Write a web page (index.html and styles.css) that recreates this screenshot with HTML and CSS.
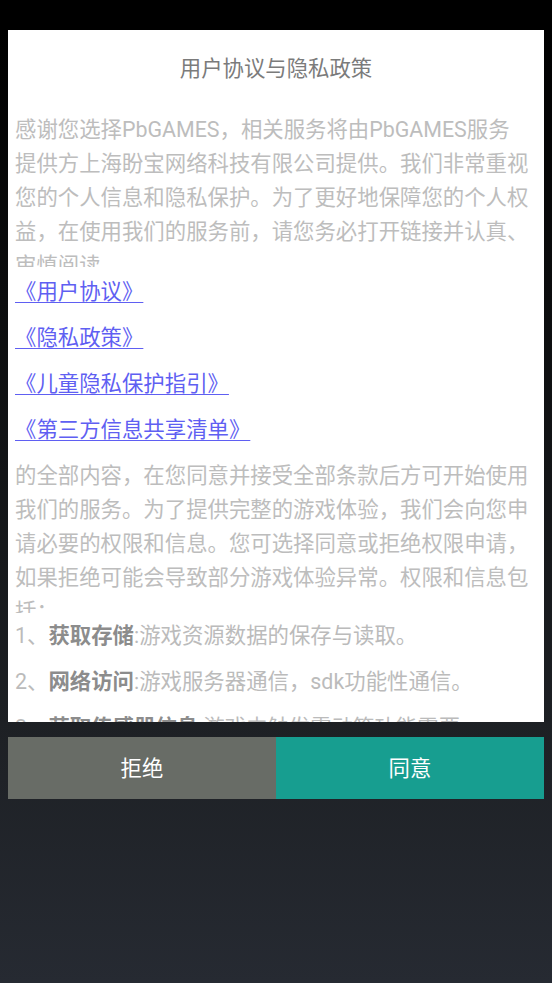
FILE: index.html
```html
<!DOCTYPE html>
<html lang="zh-CN">
<head>
<meta charset="utf-8">
<title>用户协议与隐私政策</title>
<link rel="stylesheet" href="styles.css">
</head>
<body>
<div class="screen">
  <div class="dialog">
    <div class="title">用户协议与隐私政策</div>
    <div class="scroll first">感谢您选择PbGAMES，相关服务将由PbGAMES服务<br>提供方上海盼宝网络科技有限公司提供。我们非常重视您的个人信息和隐私保护。为了更好地保障您的个人权益，在使用我们的服务前，请您务必打开链接并认真、审慎阅读</div>
    <div class="links">
      <div class="link-row"><a class="link" href="#">《用户协议》</a></div>
      <div class="link-row"><a class="link" href="#">《隐私政策》</a></div>
      <div class="link-row"><a class="link" href="#">《儿童隐私保护指引》</a></div>
      <div class="link-row"><a class="link" href="#">《第三方信息共享清单》</a></div>
    </div>
    <div class="scroll second">的全部内容，在您同意并接受全部条款后方可开始使用我们的服务。为了提供完整的游戏体验，我们会向您申请必要的权限和信息。您可选择同意或拒绝权限申请，如果拒绝可能会导致部分游戏体验异常。权限和信息包括：</div>
    <div class="perm">1、<b class="perm-name">获取存储</b>:游戏资源数据的保存与读取。</div>
    <div class="perm">2、<b class="perm-name">网络访问</b>:游戏服务器通信，sdk功能性通信。</div>
    <div class="perm">3、<b class="perm-name">获取传感器信息</b>:游戏中触发震动等功能需要。</div>
  </div>
  <div class="actions">
    <div class="btn reject">拒绝</div>
    <div class="btn agree">同意</div>
  </div>
</div>
</body>
</html>
```

FILE: styles.css
```css
html, body {
  margin: 0;
  padding: 0;
}

body {
  width: 552px;
  height: 983px;
  overflow: hidden;
  background: linear-gradient(to bottom, #000000 0px, #000000 30px, #0c0d0e 300px, #1d2024 722px, #262a32 983px);
  font-family: Roboto, "Noto Sans CJK SC", sans-serif;
  font-size: 21.4px;
}

.screen {
  padding-top: 30px;
}

.dialog {
  margin: 0 8px;
  height: 692px;
  overflow: hidden;
  background: #ffffff;
  padding-left: 7px;
  box-sizing: border-box;
}

.title {
  padding-top: 22px;
  line-height: 34px;
  text-align: center;
  color: #7b7b7b;
  margin-left: -7px;
}

.scroll {
  width: 516px;
  line-height: 34px;
  color: #bdbdbd;
  overflow: hidden;
  height: 154px;
}

.scroll.first {
  margin-top: 27px;
}

.links {
  padding-top: 2px;
}

.scroll.second {
  margin-top: 6px;
}

.link-row {
  height: 46px;
  line-height: 46px;
}

.link {
  color: #5f5ff2;
  text-decoration: underline;
  text-decoration-thickness: 1px;
  text-underline-offset: 3px;
}

.perm {
  height: 46px;
  line-height: 46px;
  color: #bbbbbb;
  white-space: nowrap;
}

.perm-name {
  font-weight: bold;
  color: #8c8c8c;
}

.actions {
  display: flex;
  margin: 15px 8px 0;
  height: 62px;
}

.btn {
  flex: 1;
  display: flex;
  align-items: center;
  justify-content: center;
  padding-bottom: 3px;
  color: #ffffff;
}

.reject {
  background: #686c66;
}

.agree {
  background: #179e90;
}
```
